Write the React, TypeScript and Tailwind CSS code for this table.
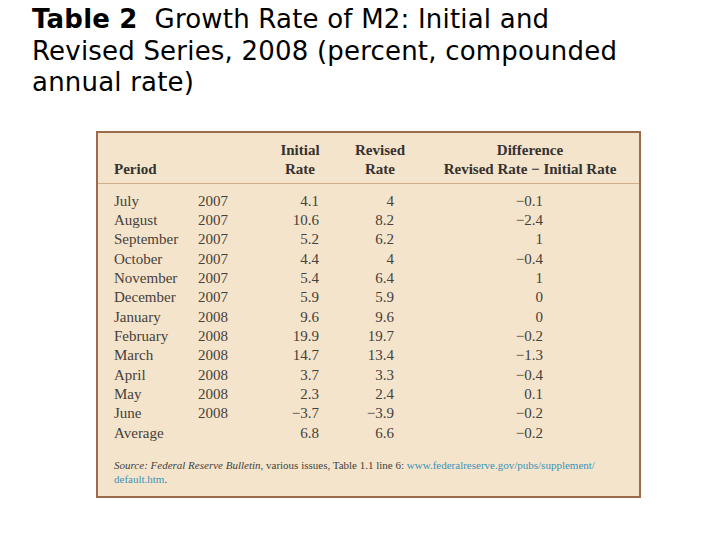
const rows: [string, string, string, string, string][] = [
  ['July', '2007', '4.1', '4', '\u22120.1'],
  ['August', '2007', '10.6', '8.2', '\u22122.4'],
  ['September', '2007', '5.2', '6.2', '1'],
  ['October', '2007', '4.4', '4', '\u22120.4'],
  ['November', '2007', '5.4', '6.4', '1'],
  ['December', '2007', '5.9', '5.9', '0'],
  ['January', '2008', '9.6', '9.6', '0'],
  ['February', '2008', '19.9', '19.7', '\u22120.2'],
  ['March', '2008', '14.7', '13.4', '\u22121.3'],
  ['April', '2008', '3.7', '3.3', '\u22120.4'],
  ['May', '2008', '2.3', '2.4', '0.1'],
  ['June', '2008', '\u22123.7', '\u22123.9', '\u22120.2'],
  ['Average', '', '6.8', '6.6', '\u22120.2'],
]

export default function App() {
  return (
    <div className="w-[720px] h-[540px] bg-white overflow-hidden">
      <h1 className="pl-[32px] pt-[4px] text-[26px] leading-[31.5px] tracking-[0.2px] text-black font-['DejaVu_Sans',sans-serif] font-normal">
        <span className="font-bold">Table 2</span>&nbsp; Growth Rate of M2: Initial and
        <br />
        Revised Series, 2008 (percent, compounded
        <br />
        annual rate)
      </h1>

      <div className="ml-[96px] mt-[32px] w-[545px] h-[367px] border-2 border-[#9b6b4b] bg-[#f4e4cb] font-['Liberation_Serif',serif] text-[#45413b]">
        <div className="grid grid-cols-[156px_60px_100px_200px] pl-[16px] pt-[8px] pb-[4px] text-[15px] leading-[19px] font-semibold text-[#353230]">
          <div className="flex items-end">Period</div>
          <div className="text-center">
            Initial
            <br />
            Rate
          </div>
          <div className="text-center">
            Revised
            <br />
            Rate
          </div>
          <div className="text-center">
            Difference
            <br />
            Revised Rate &minus; Initial Rate
          </div>
        </div>
        <div className="h-px bg-[#cfae88]" />

        <div className="pt-[8px] pl-[16px] text-[15px] leading-[19.35px]">
          {rows.map(([period, year, initial, revised, diff]) => (
            <div key={period} className="grid grid-cols-[84px_60px_61px_75px_149px]">
              <div>{period}</div>
              <div>{year}</div>
              <div className="text-right">{initial}</div>
              <div className="text-right">{revised}</div>
              <div className="text-right">{diff}</div>
            </div>
          ))}
        </div>

        <p className="pl-[16px] pr-[14px] pt-[15px] text-[11px] leading-[14px]">
          <i>Source: Federal Reserve Bulletin</i>, various issues, Table 1.1 line 6:{' '}
          <span className="text-[#3b93b8]">www.federalreserve.gov/pubs/supplement/</span>
          <br />
          <span className="text-[#3b93b8]">default.htm</span>.
        </p>
      </div>
    </div>
  )
}
